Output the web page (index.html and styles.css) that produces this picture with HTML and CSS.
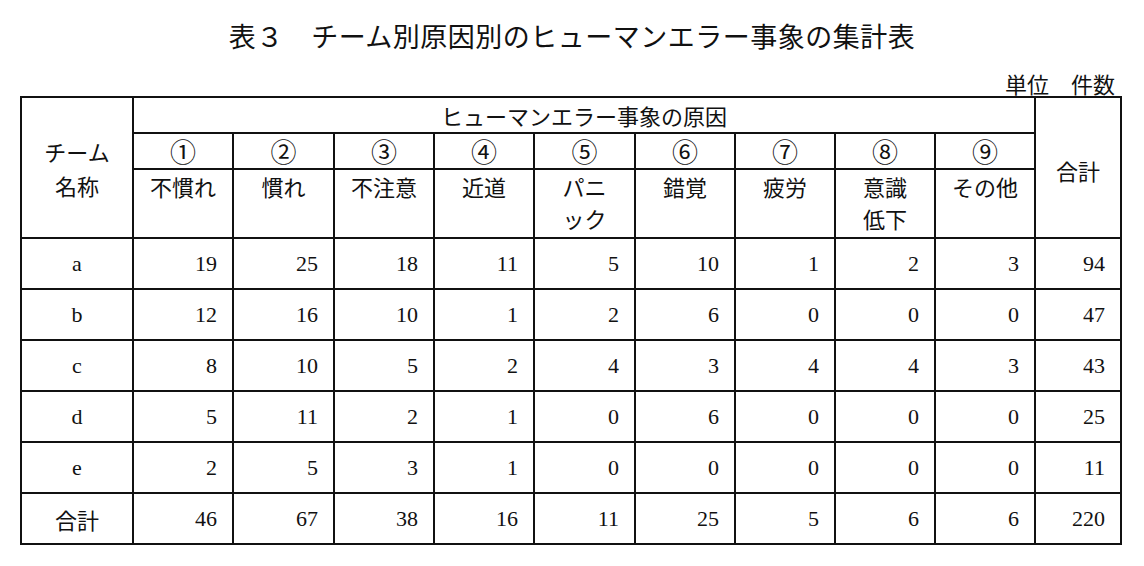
FILE: index.html
```html
<!DOCTYPE html>
<html lang="ja">
<head>
<meta charset="utf-8">
<title>表３ チーム別原因別のヒューマンエラー事象の集計表</title>
<link rel="stylesheet" href="styles.css">
</head>
<body>
<h1 class="title">表３　チーム別原因別のヒューマンエラー事象の集計表</h1>
<p class="unit">単位　件数</p>
<table class="tbl">
  <colgroup>
    <col class="w-team">
    <col class="w100"><col class="w101"><col class="w100"><col class="w100"><col class="w101"><col class="w100"><col class="w100"><col class="w100"><col class="w100">
    <col class="w-total">
  </colgroup>
  <thead>
    <tr class="r1">
      <th class="team" rowspan="3"><span class="ln">チーム</span><span class="ln">名称</span></th>
      <th class="cause-head" colspan="9">ヒューマンエラー事象の原因</th>
      <th class="total-head" rowspan="3">合計</th>
    </tr>
    <tr class="r2">
      <th class="circ">①</th><th class="circ">②</th><th class="circ">③</th><th class="circ">④</th><th class="circ">⑤</th><th class="circ">⑥</th><th class="circ">⑦</th><th class="circ">⑧</th><th class="circ">⑨</th>
    </tr>
    <tr class="r3">
      <th class="cause">不慣れ</th><th class="cause">慣れ</th><th class="cause">不注意</th><th class="cause">近道</th><th class="cause">パニ<br>ック</th><th class="cause">錯覚</th><th class="cause">疲労</th><th class="cause">意識<br>低下</th><th class="cause">その他</th>
    </tr>
  </thead>
  <tbody>
    <tr class="dr"><td class="lbl">a</td><td class="num">19</td><td class="num">25</td><td class="num">18</td><td class="num">11</td><td class="num">5</td><td class="num">10</td><td class="num">1</td><td class="num">2</td><td class="num">3</td><td class="num">94</td></tr>
    <tr class="dr"><td class="lbl">b</td><td class="num">12</td><td class="num">16</td><td class="num">10</td><td class="num">1</td><td class="num">2</td><td class="num">6</td><td class="num">0</td><td class="num">0</td><td class="num">0</td><td class="num">47</td></tr>
    <tr class="dr"><td class="lbl">c</td><td class="num">8</td><td class="num">10</td><td class="num">5</td><td class="num">2</td><td class="num">4</td><td class="num">3</td><td class="num">4</td><td class="num">4</td><td class="num">3</td><td class="num">43</td></tr>
    <tr class="dr"><td class="lbl">d</td><td class="num">5</td><td class="num">11</td><td class="num">2</td><td class="num">1</td><td class="num">0</td><td class="num">6</td><td class="num">0</td><td class="num">0</td><td class="num">0</td><td class="num">25</td></tr>
    <tr class="dr"><td class="lbl">e</td><td class="num">2</td><td class="num">5</td><td class="num">3</td><td class="num">1</td><td class="num">0</td><td class="num">0</td><td class="num">0</td><td class="num">0</td><td class="num">0</td><td class="num">11</td></tr>
    <tr class="dr"><td class="lbl jp">合計</td><td class="num">46</td><td class="num">67</td><td class="num">38</td><td class="num">16</td><td class="num">11</td><td class="num">25</td><td class="num">5</td><td class="num">6</td><td class="num">6</td><td class="num">220</td></tr>
  </tbody>
</table>
</body>
</html>
```

FILE: styles.css
```css
html, body {
  margin: 0;
  padding: 0;
  background: #ffffff;
  color: #111111;
}

body {
  font-family: "Noto Sans CJK JP", "Noto Sans", sans-serif;
  width: 1144px;
}

.title {
  margin: 0;
  padding-top: 16px;
  font-size: 27px;
  line-height: 40px;
  font-weight: 400;
  letter-spacing: 0.5px;
  text-align: center;
}

.unit {
  margin: 14px 0 0 0;
  padding-right: 29px;
  font-size: 22px;
  line-height: 26px;
  text-align: right;
}

.tbl {
  margin-left: 20px;
  width: 1102px;
  box-sizing: border-box;
  table-layout: fixed;
  border-collapse: separate;
  border-spacing: 0;
  border-top: 2px solid #111111;
  border-left: 2px solid #111111;
}

.w-team { width: 112px; }
.w100 { width: 100px; }
.w101 { width: 101px; }
.w-total { width: 86px; }

.tbl th,
.tbl td {
  box-sizing: border-box;
  padding: 0;
  border-right: 2px solid #111111;
  border-bottom: 2px solid #111111;
  font-weight: 400;
  font-size: 22px;
}

.tbl .r1 { height: 36px; }
.tbl .r2 { height: 36px; }
.tbl .r3 { height: 69px; }
.tbl .dr { height: 51px; }

.tbl .team {
  vertical-align: middle;
  text-align: center;
  line-height: 34px;
}

.tbl .team .ln {
  display: block;
}

.tbl .cause-head {
  text-align: center;
  vertical-align: middle;
  line-height: 30px;
}

.tbl .total-head {
  text-align: center;
  vertical-align: middle;
  line-height: 30px;
  padding-top: 4px;
}

.tbl .circ {
  text-align: center;
  vertical-align: middle;
  line-height: 30px;
  font-size: 26px;
}

.tbl .cause {
  text-align: center;
  vertical-align: top;
  line-height: 32px;
}

.tbl .num {
  font-family: "Liberation Serif", "Times New Roman", serif;
  text-align: right;
  vertical-align: middle;
  padding-right: 15px;
  line-height: 30px;
}

.tbl .lbl {
  font-family: "Liberation Serif", "Times New Roman", serif;
  text-align: center;
  vertical-align: middle;
  line-height: 30px;
}

.tbl .lbl.jp {
  font-family: "Noto Sans CJK JP", sans-serif;
}
```
